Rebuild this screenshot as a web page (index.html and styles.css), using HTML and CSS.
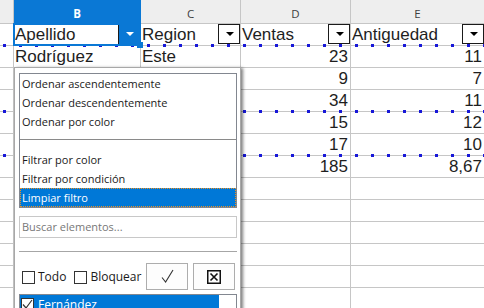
FILE: index.html
```html
<!DOCTYPE html>
<html>
<head>
<meta charset="utf-8">
<link rel="stylesheet" href="styles.css">
</head>
<body>
<div class="sheet">
  <div class="row hdr">
    <div class="c a"></div>
    <div class="c b hsel">B</div>
    <div class="c cc">C</div>
    <div class="c d">D</div>
    <div class="c e">E</div>
  </div>
  <div class="row brk">
    <div class="c a"></div>
    <div class="c b">Apellido<span class="fbtn on"><i class="tri"></i></span><span class="frame"></span><span class="handle"></span></div>
    <div class="c cc">Region<span class="fbtn"><i class="tri"></i></span></div>
    <div class="c d">Ventas<span class="fbtn"><i class="tri"></i></span></div>
    <div class="c e">Antiguedad<span class="fbtn"><i class="tri"></i></span></div>
  </div>
  <div class="row">
    <div class="c a"></div>
    <div class="c b">Rodríguez</div>
    <div class="c cc">Este</div>
    <div class="c d n">23</div>
    <div class="c e n">11</div>
  </div>
  <div class="row">
    <div class="c a"></div><div class="c b"></div><div class="c cc"></div>
    <div class="c d n">9</div><div class="c e n">7</div>
  </div>
  <div class="row brk">
    <div class="c a"></div><div class="c b"></div><div class="c cc"></div>
    <div class="c d n">34</div><div class="c e n">11</div>
  </div>
  <div class="row">
    <div class="c a"></div><div class="c b"></div><div class="c cc"></div>
    <div class="c d n">15</div><div class="c e n">12</div>
  </div>
  <div class="row brk">
    <div class="c a"></div><div class="c b"></div><div class="c cc"></div>
    <div class="c d n">17</div><div class="c e n">10</div>
  </div>
  <div class="row">
    <div class="c a"></div><div class="c b"></div><div class="c cc"></div>
    <div class="c d n">185</div><div class="c e n">8,67</div>
  </div>
  <div class="row"><div class="c a"></div><div class="c b"></div><div class="c cc"></div><div class="c d"></div><div class="c e"></div></div>
  <div class="row"><div class="c a"></div><div class="c b"></div><div class="c cc"></div><div class="c d"></div><div class="c e"></div></div>
  <div class="row"><div class="c a"></div><div class="c b"></div><div class="c cc"></div><div class="c d"></div><div class="c e"></div></div>
  <div class="row"><div class="c a"></div><div class="c b"></div><div class="c cc"></div><div class="c d"></div><div class="c e"></div></div>
  <div class="row"><div class="c a"></div><div class="c b"></div><div class="c cc"></div><div class="c d"></div><div class="c e"></div></div>
  <div class="row"><div class="c a"></div><div class="c b"></div><div class="c cc"></div><div class="c d"></div><div class="c e"></div></div>

  <div class="popup">
    <div class="menu">
      <div class="item">Ordenar ascendentemente</div>
      <div class="item">Ordenar descendentemente</div>
      <div class="item">Ordenar por color</div>
      <div class="msep"></div>
      <div class="item">Filtrar por color</div>
      <div class="item">Filtrar por condición</div>
      <div class="item hl">Limpiar filtro</div>
    </div>
    <div class="search">Buscar elementos...</div>
    <div class="psep"></div>
    <div class="opts">
      <span class="cb"></span><span class="lbl">Todo</span>
      <span class="cb cb2"></span><span class="lbl">Bloquear</span>
      <span class="btns">
        <span class="pbtn"><svg width="13" height="15" viewBox="0 0 13 15"><path d="M1 8.5 L4.6 13 L12 1" fill="none" stroke="#333" stroke-width="1.1"/></svg></span>
        <span class="pbtn"><svg width="14" height="14" viewBox="0 0 14 14"><rect x="0.75" y="0.75" width="12.5" height="12.5" fill="none" stroke="#111" stroke-width="1.5"/><path d="M3.5 3.5 L10.5 10.5 M10.5 3.5 L3.5 10.5" stroke="#111" stroke-width="1.6"/></svg></span>
      </span>
    </div>
    <div class="list">
      <div class="litem"><span class="lcb"><svg width="11" height="11" viewBox="0 0 11 11"><path d="M1 5.5 L4 9 L10 1" fill="none" stroke="#333" stroke-width="1.2"/></svg></span>Fernández</div>
    </div>
  </div>
</div>
</body>
</html>
```
FILE: styles.css
```css
html, body {
  margin: 0;
  padding: 0;
  background: #fff;
}
.sheet {
  position: relative;
  width: 484px;
  height: 308px;
  overflow: hidden;
  font-family: "Liberation Sans", Arial, sans-serif;
  color: #1e1e1e;
}
.row {
  display: flex;
  height: 22px;
  position: relative;
}
.c {
  box-sizing: border-box;
  height: 100%;
  border-right: 1px solid #c6c6c6;
  border-bottom: 1px solid #c6c6c6;
  position: relative;
  font-size: 17px;
  line-height: 21px;
  padding-left: 1px;
  white-space: nowrap;
}
.a { width: 14px; }
.b { width: 127px; }
.cc { width: 100px; }
.d { width: 110px; }
.e { width: 133px; border-right: none; }
.n { text-align: right; padding-right: 2px; padding-left: 0; }

.hdr { height: 24px; }
.hdr .c {
  background: #eeeeee;
  font-family: "Open Sans", "Noto Sans", sans-serif;
  font-size: 11.5px;
  line-height: 19px;
  padding-top: 4px;
  color: #404040;
  text-align: center;
  padding-left: 0;
}
.hdr .hsel {
  background: #0a78d5;
  color: #fff;
  font-weight: bold;
  border-right-color: #0a78d5;
}

.brk::after {
  content: "";
  position: absolute;
  left: 0;
  right: 0;
  bottom: -1px;
  height: 3px;
  background: repeating-linear-gradient(to right, transparent 0 3px, #1818d8 3px 6px, transparent 6px 16px);
  z-index: 1;
}

.fbtn {
  position: absolute;
  right: 0;
  top: 0;
  width: 22px;
  height: 20px;
  box-sizing: border-box;
  border: 1px solid #1a1a1a;
  background: #fff;
  display: flex;
  align-items: center;
  justify-content: center;
}
.fbtn.on {
  background: #0a78d5;
  border: none;
  border-left: 1px solid #1a1a1a;
}
.tri {
  width: 0;
  height: 0;
  border-left: 4px solid transparent;
  border-right: 4px solid transparent;
  border-top: 4px solid #000;
  margin-left: 1px;
}
.fbtn.on .tri { border-top-color: #fff; }

.frame {
  position: absolute;
  left: -1px;
  top: -1px;
  width: 128px;
  height: 23px;
  box-sizing: border-box;
  border: 2px solid #0a78d5;
  z-index: 2;
}
.handle {
  position: absolute;
  left: 123px;
  top: 18px;
  width: 6px;
  height: 6px;
  background: #0a78d5;
  z-index: 3;
}

.popup {
  position: absolute;
  left: 14px;
  top: 67px;
  width: 227px;
  height: 260px;
  box-sizing: border-box;
  border: 1px solid #a8a8a8;
  background: #fff;
  box-shadow: 2px 1px 3px rgba(0,0,0,0.5);
  padding: 5px 3px 0 4px;
  display: flex;
  flex-direction: column;
  z-index: 5;
  font-family: "Open Sans", "Noto Sans", sans-serif;
  font-size: 11px;
  color: #1a1a1a;
}
.menu {
  border: 1px solid #828790;
  background: #fff;
}
.item {
  height: 19px;
  line-height: 19px;
  padding-left: 2px;
  box-sizing: border-box;
}
.item.hl {
  background: #0078d7;
  color: #fff;
  border: 1px dotted #f0901e;
  line-height: 17px;
  padding-left: 1px;
}
.msep {
  height: 19px;
  box-sizing: border-box;
  position: relative;
}
.msep::after {
  content: "";
  position: absolute;
  left: 0;
  right: 0;
  top: 8px;
  height: 1px;
  background: #8a8a8a;
}
.search {
  margin-top: 8px;
  height: 22px;
  box-sizing: border-box;
  border: 1px solid #c8c8c8;
  color: #777;
  line-height: 20px;
  padding-left: 2px;
}
.psep {
  margin-top: 13px;
  height: 1px;
  background: #a6a6a6;
}
.opts {
  margin-top: 11px;
  height: 27px;
  display: flex;
  align-items: center;
  padding: 0 2px 0 3px;
}
.cb {
  width: 13px;
  height: 13px;
  box-sizing: border-box;
  border: 1px solid #333;
  background: #fff;
  margin-top: 1px;
}
.cb2 { margin-left: 8px; }
.lbl {
  margin-left: 3px;
  font-size: 12px;
}
.btns {
  margin-left: auto;
  display: flex;
  gap: 5px;
}
.pbtn {
  width: 42px;
  height: 27px;
  box-sizing: border-box;
  border: 1px solid #adadad;
  background: #fdfdfd;
  display: flex;
  align-items: center;
  justify-content: center;
}
.list {
  margin-top: 4px;
  border: 1px solid #828790;
  flex: 1;
  padding-right: 17px;
}
.litem {
  height: 19px;
  background: #0078d7;
  color: #fff;
  display: flex;
  align-items: center;
  font-size: 12px;
}
.lcb {
  width: 13px;
  height: 13px;
  box-sizing: border-box;
  border: 1px solid #333;
  background: #fff;
  margin: 0 4px 0 1px;
  display: flex;
  align-items: center;
  justify-content: center;
}
```
